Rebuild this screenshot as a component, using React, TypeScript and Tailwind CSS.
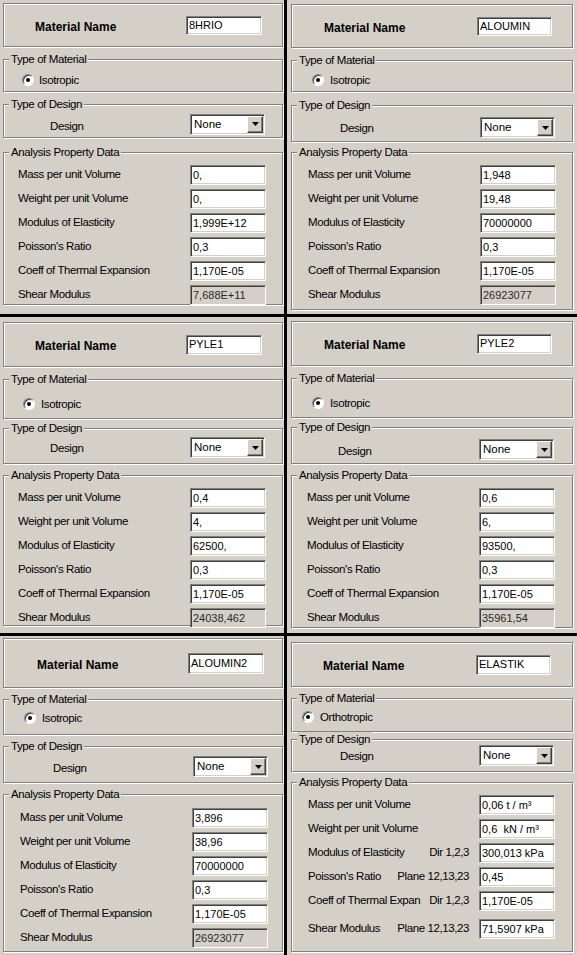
import type { ReactNode } from "react";

type Row = {
  label: string;
  value: string;
  mid?: string;
  disabled?: boolean;
  extra?: string;
};

type PanelCfg = {
  name: string;
  kind: string;
  pad: string;
  nameBox: string;
  nameLabel: string;
  nameInput: string;
  tm: string;
  tmRow: string;
  radioGap: string;
  td: string;
  tdRow: string;
  designLabel: string;
  ap: string;
  apRows: string;
  rowLabel: string;
  rows: Row[];
};

const iso = (mass: string, weight: string, mod: string, shear: string): Row[] => [
  { label: "Mass per unit Volume", value: mass },
  { label: "Weight per unit Volume", value: weight },
  { label: "Modulus of Elasticity", value: mod },
  { label: "Poisson's Ratio", value: "0,3" },
  { label: "Coeff of Thermal Expansion", value: "1,170E-05" },
  { label: "Shear Modulus", value: shear, disabled: true },
];

const panels: PanelCfg[] = [
  {
    name: "8HRIO",
    kind: "Isotropic",
    pad: "pt-[3px] pl-[3px] pr-[1px]",
    nameBox: "h-[44px]",
    nameLabel: "w-[182px] pl-[31px] pt-[3px]",
    nameInput: "h-[19px] w-[76px]",
    tm: "mt-[12px] h-[33px]",
    tmRow: "pt-[14px] pl-[18px]",
    radioGap: "ml-[5px]",
    td: "mt-[12px] h-[34px]",
    tdRow: "pt-[8px]",
    designLabel: "w-[186px] pl-[46px] pt-[5px]",
    ap: "mt-[14px] h-[153px]",
    apRows: "pt-[10px]",
    rowLabel: "w-[186px] pl-[14px]",
    rows: iso("0,", "0,", "1,999E+12", "7,688E+11"),
  },
  {
    name: "ALOUMIN",
    kind: "Isotropic",
    pad: "pt-[4px] pl-[4px] pr-[4px]",
    nameBox: "h-[44px]",
    nameLabel: "w-[185px] pl-[32px] pt-[3px]",
    nameInput: "h-[19px] w-[75px]",
    tm: "mt-[12px] h-[32px]",
    tmRow: "pt-[13px] pl-[20px]",
    radioGap: "ml-[6px]",
    td: "mt-[13px] h-[37px]",
    tdRow: "pt-[11px]",
    designLabel: "w-[188px] pl-[48px] pt-[2px]",
    ap: "mt-[10px] h-[158px]",
    apRows: "pt-[10px]",
    rowLabel: "w-[188px] pl-[16px]",
    rows: iso("1,948", "19,48", "70000000", "26923077"),
  },
  {
    name: "PYLE1",
    kind: "Isotropic",
    pad: "pt-[5px] pl-[3px] pr-[1px]",
    nameBox: "h-[45px]",
    nameLabel: "w-[182px] pl-[31px] pt-[3px]",
    nameInput: "h-[20px] w-[76px]",
    tm: "mt-[12px] h-[40px]",
    tmRow: "pt-[18px] pl-[19px]",
    radioGap: "ml-[6px]",
    td: "mt-[9px] h-[36px]",
    tdRow: "pt-[8px]",
    designLabel: "w-[186px] pl-[46px] pt-[3px]",
    ap: "mt-[11px] h-[151px]",
    apRows: "pt-[10px]",
    rowLabel: "w-[186px] pl-[14px]",
    rows: iso("0,4", "4,", "62500,", "24038,462"),
  },
  {
    name: "PYLE2",
    kind: "Isotropic",
    pad: "pt-[4px] pl-[4px] pr-[4px]",
    nameBox: "h-[45px]",
    nameLabel: "w-[185px] pl-[32px] pt-[3px]",
    nameInput: "h-[20px] w-[75px]",
    tm: "mt-[12px] h-[40px]",
    tmRow: "pt-[18px] pl-[20px]",
    radioGap: "ml-[6px]",
    td: "mt-[9px] h-[37px]",
    tdRow: "pt-[11px]",
    designLabel: "w-[187px] pl-[46px] pt-[4px]",
    ap: "mt-[11px] h-[153px]",
    apRows: "pt-[10px]",
    rowLabel: "w-[187px] pl-[15px]",
    rows: iso("0,6", "6,", "93500,", "35961,54"),
  },
  {
    name: "ALOUMIN2",
    kind: "Isotropic",
    pad: "pt-[2px] pl-[3px] pr-[1px]",
    nameBox: "h-[50px]",
    nameLabel: "w-[184px] pl-[33px] pt-[3px]",
    nameInput: "h-[21px] w-[76px]",
    tm: "mt-[11px] h-[36px]",
    tmRow: "pt-[12px] pl-[20px]",
    radioGap: "ml-[6px]",
    td: "mt-[11px] h-[37px]",
    tdRow: "pt-[9px]",
    designLabel: "w-[189px] pl-[49px] pt-[4px]",
    ap: "mt-[11px] h-[158px]",
    apRows: "pt-[11px]",
    rowLabel: "w-[188px] pl-[16px]",
    rows: iso("3,896", "38,96", "70000000", "26923077"),
  },
  {
    name: "ELASTIK",
    kind: "Orthotropic",
    pad: "pt-[6px] pl-[4px] pr-[4px]",
    nameBox: "h-[45px]",
    nameLabel: "w-[184px] pl-[31px] pt-[3px]",
    nameInput: "h-[20px] w-[75px]",
    tm: "mt-[11px] h-[34px]",
    tmRow: "pt-[12px] pl-[10px]",
    radioGap: "ml-[6px]",
    td: "mt-[7px] h-[33px]",
    tdRow: "pt-[5px]",
    designLabel: "w-[187px] pl-[48px] pt-[3px]",
    ap: "mt-[10px] h-[170px]",
    apRows: "pt-[10px]",
    rowLabel: "w-[187px] pl-[16px]",
    rows: [
      { label: "Mass per unit Volume", value: "0,06 t / m³" },
      { label: "Weight per unit Volume", value: "0,6  kN / m³" },
      { label: "Modulus of Elasticity", mid: "Dir 1,2,3", value: "300,013 kPa" },
      { label: "Poisson's Ratio", mid: "Plane 12,13,23", value: "0,45" },
      { label: "Coeff of Thermal Expan", mid: "Dir 1,2,3", value: "1,170E-05" },
      { label: "Shear Modulus", mid: "Plane 12,13,23", value: "71,5907 kPa", extra: "mt-[4px]" },
    ],
  },
];

function Etched({ legend, className, children }: { legend?: string; className: string; children: ReactNode }) {
  return (
    <div className={`relative shrink-0 border border-[#808080] shadow-[inset_1px_1px_0_#fff,1px_1px_0_#fff] ${className}`}>
      {legend && (
        <span className="absolute left-[5px] top-[-8px] bg-[#d4d0c8] px-[2px] text-[11.5px] leading-[14px] tracking-[-0.4px]">
          {legend}
        </span>
      )}
      {children}
    </div>
  );
}

function Field({ value, disabled, className = "h-[20px] w-[76px]" }: { value: string; disabled?: boolean; className?: string }) {
  return (
    <div
      className={`flex shrink-0 items-center whitespace-pre border border-t-[#808080] border-l-[#808080] border-b-white border-r-white pl-[2px] text-[11px] leading-none shadow-[inset_1px_1px_0_#404040,inset_-1px_-1px_0_#d4d0c8] ${
        disabled ? "bg-[#d4d0c8] text-[#2a2a2a]" : "bg-white text-black"
      } ${className}`}
    >
      {value}
    </div>
  );
}

function Select() {
  return (
    <div className="flex h-[21px] w-[75px] shrink-0 items-center border border-t-[#808080] border-l-[#808080] border-b-white border-r-white bg-white p-[1px] text-[11.5px] shadow-[inset_1px_1px_0_#404040,inset_-1px_-1px_0_#d4d0c8]">
      <span className="flex-1 pl-[2px]">None</span>
      <div className="flex h-[17px] w-[16px] items-center justify-center border border-t-white border-l-white border-b-[#404040] border-r-[#404040] bg-[#d4d0c8] shadow-[inset_-1px_-1px_0_#808080]">
        <svg width="7" height="4" viewBox="0 0 7 4">
          <path d="M0 0h7L3.5 4z" fill="#000" />
        </svg>
      </div>
    </div>
  );
}

function Radio() {
  return (
    <span className="flex h-[12px] w-[12px] shrink-0 items-center justify-center rounded-full border border-t-[#808080] border-l-[#808080] border-b-white border-r-white bg-white shadow-[inset_1px_1px_0_#404040]">
      <span className="h-[4px] w-[4px] rounded-full bg-black" />
    </span>
  );
}

function Panel({ cfg }: { cfg: PanelCfg }) {
  return (
    <div className={`flex flex-col overflow-hidden bg-[#d4d0c8] ${cfg.pad}`}>
      <Etched className={`flex items-center ${cfg.nameBox}`}>
        <span className={`shrink-0 text-[12px] font-bold ${cfg.nameLabel}`}>Material Name</span>
        <Field value={cfg.name} className={cfg.nameInput} />
      </Etched>

      <Etched legend="Type of Material" className={cfg.tm}>
        <div className={`flex items-center ${cfg.tmRow}`}>
          <Radio />
          <span className={`leading-[12px] tracking-[-0.4px] ${cfg.radioGap}`}>{cfg.kind}</span>
        </div>
      </Etched>

      <Etched legend="Type of Design" className={cfg.td}>
        <div className={`flex items-center ${cfg.tdRow}`}>
          <span className={`shrink-0 tracking-[-0.4px] ${cfg.designLabel}`}>Design</span>
          <Select />
        </div>
      </Etched>

      <Etched legend="Analysis Property Data" className={cfg.ap}>
        <div className={`flex flex-col ${cfg.apRows}`}>
          {cfg.rows.map((r) => (
            <div key={r.label} className={`flex h-[24px] items-center ${r.extra ?? ""}`}>
              <div className={`flex shrink-0 items-center justify-between tracking-[-0.4px] ${cfg.rowLabel}`}>
                <span>{r.label}</span>
                {r.mid && <span className="pr-[10px]">{r.mid}</span>}
              </div>
              <Field value={r.value} disabled={r.disabled} />
            </div>
          ))}
        </div>
      </Etched>
    </div>
  );
}

export default function App() {
  return (
    <div className="grid h-[955px] w-[577px] grid-cols-[284px_290px] grid-rows-[314px_316px_319px] gap-[3px] bg-black font-['Liberation_Sans',Arial,sans-serif] text-[11.5px] text-black">
      {panels.map((p) => (
        <Panel key={p.name} cfg={p} />
      ))}
    </div>
  );
}
